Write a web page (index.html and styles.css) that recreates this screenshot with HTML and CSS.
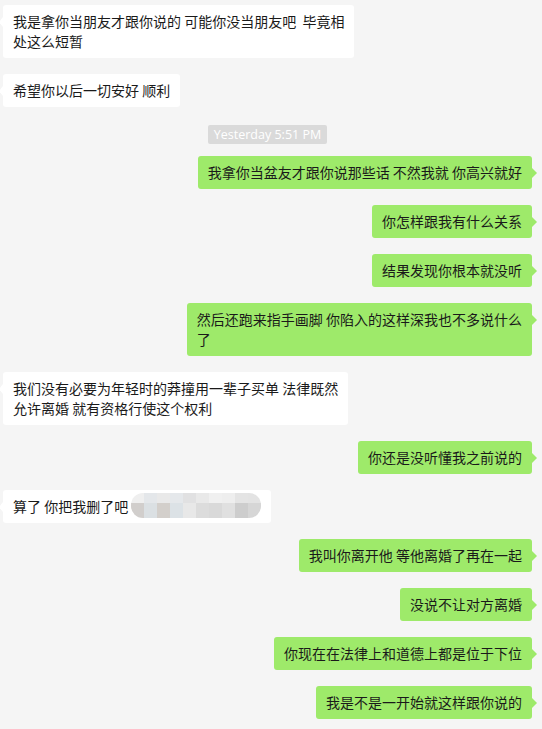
FILE: index.html
```html
<!DOCTYPE html>
<html lang="zh-CN">
<head>
<meta charset="utf-8">
<title>Chat</title>
<link rel="stylesheet" href="styles.css">
</head>
<body>
<div class="chat">
  <div class="msg in"><div class="bubble">我是拿你当朋友才跟你说的 可能你没当朋友吧&nbsp; 毕竟相<br>处这么短暂</div></div>
  <div class="msg in"><div class="bubble">希望你以后一切安好 顺利</div></div>
  <div class="time"><span>Yesterday 5:51 PM</span></div>
  <div class="msg out"><div class="bubble">我拿你当盆友才跟你说那些话 不然我就 你高兴就好</div></div>
  <div class="msg out"><div class="bubble">你怎样跟我有什么关系</div></div>
  <div class="msg out"><div class="bubble">结果发现你根本就没听</div></div>
  <div class="msg out"><div class="bubble">然后还跑来指手画脚 你陷入的这样深我也不多说什么<br>了</div></div>
  <div class="msg in"><div class="bubble">我们没有必要为年轻时的莽撞用一辈子买单 法律既然<br>允许离婚 就有资格行使这个权利</div></div>
  <div class="msg out"><div class="bubble">你还是没听懂我之前说的</div></div>
  <div class="msg in"><div class="bubble flexed"><span>算了 你把我删了吧</span><span class="mosaic"><i class="t1"></i><i class="t2"></i><i class="t3"></i><i class="t4"></i><i class="t5"></i><i class="t6"></i><i class="t7"></i><i class="t8"></i><i class="t9"></i><i class="t10"></i><i class="b1"></i><i class="b2"></i><i class="b3"></i><i class="b4"></i><i class="b5"></i><i class="b6"></i><i class="b7"></i><i class="b8"></i><i class="b9"></i><i class="b10"></i></span></div></div>
  <div class="msg out"><div class="bubble">我叫你离开他 等他离婚了再在一起</div></div>
  <div class="msg out"><div class="bubble">没说不让对方离婚</div></div>
  <div class="msg out"><div class="bubble">你现在在法律上和道德上都是位于下位</div></div>
  <div class="msg out"><div class="bubble">我是不是一开始就这样跟你说的</div></div>
</div>
</body>
</html>
```
FILE: styles.css
```css
html, body {
  margin: 0;
  padding: 0;
  background: #f5f5f5;
}
body {
  width: 542px;
  height: 729px;
  overflow: hidden;
  font-family: "Noto Sans CJK SC", "Noto Sans", sans-serif;
  font-size: 14px;
  color: #1a1a1a;
}
.chat {
  display: flex;
  flex-direction: column;
  gap: 16px;
  padding: 5px 10px 0 3px;
}
.msg {
  display: flex;
}
.msg.out {
  justify-content: flex-end;
}
.bubble {
  position: relative;
  white-space: nowrap;
  line-height: 20px;
  padding: 6px 10px 7px;
  border-radius: 3px;
}
.in .bubble {
  background: #ffffff;
}
.out .bubble {
  background: #9eea6a;
}
.bubble::after {
  content: "";
  position: absolute;
  top: 12px;
  width: 0;
  height: 0;
  border-top: 5px solid transparent;
  border-bottom: 5px solid transparent;
}
.in .bubble::after {
  left: -4px;
  border-right: 4px solid #ffffff;
}
.out .bubble::after {
  right: -5px;
  border-left: 5px solid #9eea6a;
}
.bubble.flexed {
  display: flex;
  align-items: center;
}
.mosaic {
  display: grid;
  grid-template-columns: repeat(10, 13px);
  grid-template-rows: 10px 15px;
  height: 25px;
  margin: -3px 0 -2px 3px;
  border-radius: 12px;
  overflow: hidden;
}
.mosaic i { display: block; }
.t1 { background: #efefef; } .t2 { background: #e4e7ea; } .t3 { background: #e9e9e9; }
.t4 { background: #e5e8eb; } .t5 { background: #e1e1e2; } .t6 { background: #e9e9e9; }
.t7 { background: #f0f0f0; } .t8 { background: #eeeeee; } .t9 { background: #e4e4e4; }
.t10 { background: #e3e3e3; }
.b1 { background: #d1cecc; } .b2 { background: #dbe0e3; } .b3 { background: #d3cfcb; }
.b4 { background: #dce2e6; } .b5 { background: #e8e8e8; } .b6 { background: #dcdcdc; }
.b7 { background: #d9d9d9; } .b8 { background: #e0e0e0; } .b9 { background: #cdcdcd; }
.b10 { background: #d6d6d6; }
.time {
  display: flex;
  justify-content: center;
  margin: 2px 0 -4px;
}
.time span {
  background: #dadada;
  color: #ffffff;
  font-family: "Open Sans", "Liberation Sans", sans-serif;
  font-size: 12.5px;
  line-height: 19px;
  padding: 0 6px;
  border-radius: 2px;
}
```
